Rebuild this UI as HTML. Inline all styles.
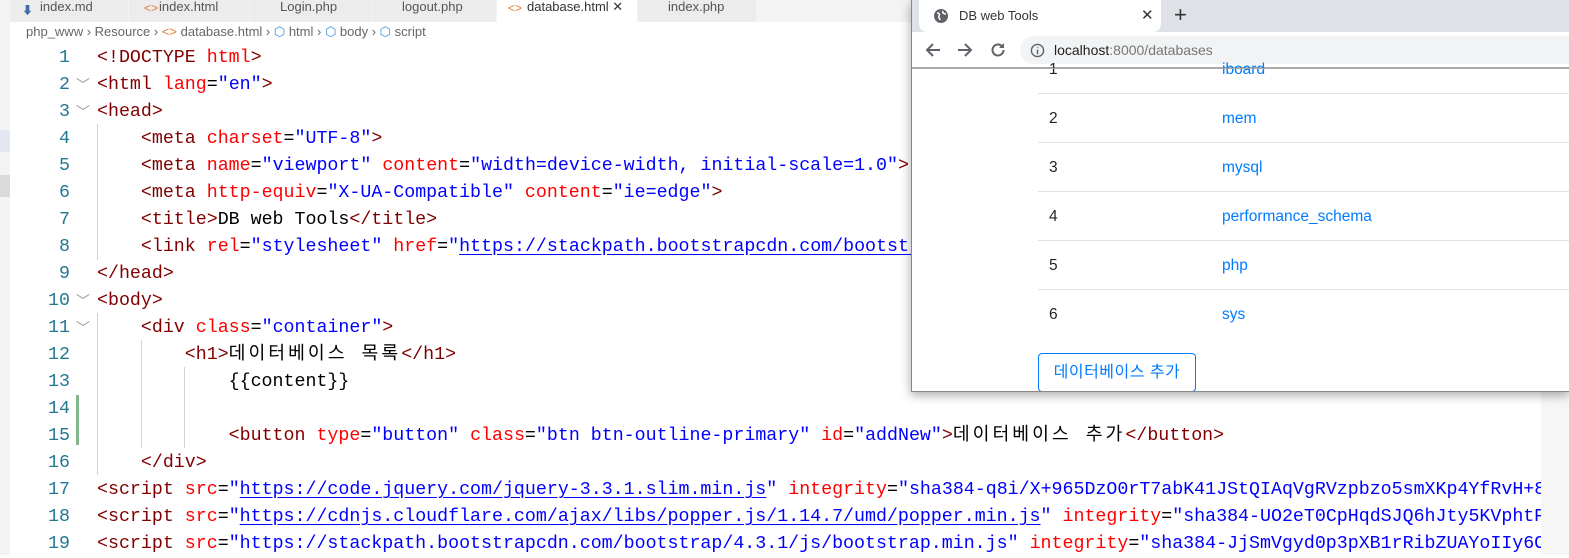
<!DOCTYPE html>
<html><head><meta charset="utf-8">
<style>
*{margin:0;padding:0;box-sizing:border-box}
body{width:1569px;height:555px;overflow:hidden;background:#fff;position:relative;font-family:"Liberation Sans","Noto Sans CJK KR",sans-serif}
.side{position:absolute;left:0;top:0;width:10px;height:555px;background:#f3f3f3}
.tabs{position:absolute;left:10px;top:0;width:1559px;height:22px;background:#f3f3f3}
.tab{position:absolute;top:0;height:22px;background:#ececec;border-right:1px solid #f3f3f3;font-size:13px;color:#555;line-height:14px;padding-left:30px;overflow:hidden}
.tab.act{background:#fff;color:#333}
.crumb{position:absolute;left:26px;top:24px;font-size:13px;color:#666;white-space:nowrap}
.code{position:absolute;left:0;top:45px;font-family:"Liberation Mono","Noto Sans CJK KR",monospace;font-size:18.3px;line-height:27px;white-space:pre}
.ko{letter-spacing:3px}
.ln{position:absolute;left:10px;width:60px;text-align:right;color:#237893;font-family:"Liberation Mono",monospace;font-size:18.3px;line-height:27px}
.t{color:#800000}.a{color:#ff0000}.s{color:#0000ff}.u{text-decoration:underline;text-decoration-color:#0000ff;text-underline-offset:3px}
.guide{position:absolute;width:1px;background:#d3d3d3}
.fold{position:absolute;left:76px;color:#999;font-size:14px;line-height:27px}
.mini{position:absolute;left:1541px;top:392px;width:28px;height:163px;background:#f6f6f6}
.win{position:absolute;left:911px;top:0;width:658px;height:392px;background:#fff;border-left:1px solid #888;border-bottom:1px solid #888;box-shadow:0 3px 10px rgba(0,0,0,.35);overflow:hidden}
.tstrip{position:absolute;left:0;top:0;width:100%;height:32px;background:#dee1e6}
.btab{position:absolute;left:7px;top:0;width:242px;height:32px;background:#fff;border-radius:0 0 8px 8px;font-size:13px;color:#333}
.nav{position:absolute;left:0;top:32px;width:100%;height:36px;background:#fff;border-bottom:1px solid #aaa}
.pill{position:absolute;left:108px;top:4px;width:560px;height:28px;background:#f1f3f4;border-radius:14px;font-size:14px;line-height:28px;padding-left:34px;color:#222}
.row{position:absolute;left:126px;width:540px;border-top:1px solid #dee2e6}
.cell{position:absolute;font-size:15.5px;color:#212529}
.lk{color:#007bff}
.btn{position:absolute;left:126px;top:353px;width:158px;height:39px;border:1px solid #007bff;border-radius:4px;color:#007bff;font-size:16px;text-align:center;line-height:37px;letter-spacing:0.5px}
</style></head><body>
<div class="side"></div>
<div style="position:absolute;left:0;top:130px;width:10px;height:22px;background:#e4e6f1"></div>
<div style="position:absolute;left:0;top:175px;width:10px;height:22px;background:#dadada"></div>
<div class="tabs">
<div class="tab" style="left:0;width:119px">index.md</div>
<div class="tab" style="left:119px;width:121px">index.html</div>
<div class="tab" style="left:240px;width:122px">Login.php</div>
<div class="tab" style="left:362px;width:125px">logout.php</div>
<div class="tab act" style="left:487px;width:141px">database.html ✕</div>
<div class="tab" style="left:628px;width:119px">index.php</div>
</div>
<div style="position:absolute;left:22px;top:2px;color:#3a6ea5;font-size:11px">⬇</div>
<div style="position:absolute;left:144px;top:1px;color:#e37933;font-size:12px">&lt;&gt;</div>
<div style="position:absolute;left:508px;top:1px;color:#e37933;font-size:12px">&lt;&gt;</div>
<div class="crumb">php_www › Resource › <span style="color:#e37933">&lt;&gt;</span> database.html › <span style="color:#3a8ed6">⬡</span> html › <span style="color:#3a8ed6">⬡</span> body › <span style="color:#3a8ed6">⬡</span> script</div>

<div class="ln" style="top:45px">1<br>2<br>3<br>4<br>5<br>6<br>7<br>8<br>9<br>10<br>11<br>12<br>13<br>14<br>15<br>16<br>17<br>18<br>19</div>
<div class="fold" style="top:72px">﹀</div><div class="fold" style="top:99px">﹀</div><div class="fold" style="top:288px">﹀</div><div class="fold" style="top:315px">﹀</div>
<div style="position:absolute;left:76px;top:395px;width:3px;height:50px;background:#81b88b"></div>
<div class="guide" style="left:97px;top:124px;height:136px"></div>
<div class="guide" style="left:97px;top:313px;height:162px"></div>
<div class="guide" style="left:141px;top:340px;height:108px"></div>
<div class="guide" style="left:184px;top:367px;height:81px"></div>
<div class="code" style="left:97px"><span class="t">&lt;!DOCTYPE</span> <span class="a">html</span><span class="t">&gt;</span>
<span class="t">&lt;html</span> <span class="a">lang</span>=<span class="s">"en"</span><span class="t">&gt;</span>
<span class="t">&lt;head&gt;</span>
    <span class="t">&lt;meta</span> <span class="a">charset</span>=<span class="s">"UTF-8"</span><span class="t">&gt;</span>
    <span class="t">&lt;meta</span> <span class="a">name</span>=<span class="s">"viewport"</span> <span class="a">content</span>=<span class="s">"width=device-width, initial-scale=1.0"</span><span class="t">&gt;</span>
    <span class="t">&lt;meta</span> <span class="a">http-equiv</span>=<span class="s">"X-UA-Compatible"</span> <span class="a">content</span>=<span class="s">"ie=edge"</span><span class="t">&gt;</span>
    <span class="t">&lt;title&gt;</span>DB web Tools<span class="t">&lt;/title&gt;</span>
    <span class="t">&lt;link</span> <span class="a">rel</span>=<span class="s">"stylesheet"</span> <span class="a">href</span>=<span class="s">"<span class="u">https://stackpath.bootstrapcdn.com/bootstrap</span>"</span>
<span class="t">&lt;/head&gt;</span>
<span class="t">&lt;body&gt;</span>
    <span class="t">&lt;div</span> <span class="a">class</span>=<span class="s">"container"</span><span class="t">&gt;</span>
        <span class="t">&lt;h1&gt;</span><span class="ko">데이터베이스 목록</span><span class="t">&lt;/h1&gt;</span>
            {{content}}

            <span class="t">&lt;button</span> <span class="a">type</span>=<span class="s">"button"</span> <span class="a">class</span>=<span class="s">"btn btn-outline-primary"</span> <span class="a">id</span>=<span class="s">"addNew"</span><span class="t">&gt;</span><span class="ko">데이터베이스 추가</span><span class="t">&lt;/button&gt;</span>
    <span class="t">&lt;/div&gt;</span>
<span class="t">&lt;script</span> <span class="a">src</span>=<span class="s">"<span class="u">https://code.jquery.com/jquery-3.3.1.slim.min.js</span>"</span> <span class="a">integrity</span>=<span class="s">"sha384-q8i/X+965DzO0rT7abK41JStQIAqVgRVzpbzo5smXKp4YfRvH+8</span>
<span class="t">&lt;script</span> <span class="a">src</span>=<span class="s">"<span class="u">https://cdnjs.cloudflare.com/ajax/libs/popper.js/1.14.7/umd/popper.min.js</span>"</span> <span class="a">integrity</span>=<span class="s">"sha384-UO2eT0CpHqdSJQ6hJty5KVphtP</span>
<span class="t">&lt;script</span> <span class="a">src</span>=<span class="s">"https://stackpath.bootstrapcdn.com/bootstrap/4.3.1/js/bootstrap.min.js"</span> <span class="a">integrity</span>=<span class="s">"sha384-JjSmVgyd0p3pXB1rRibZUAYoIIy6O</span></div>
<div style="position:absolute;left:1541px;top:0;width:28px;height:555px;background:#fff"></div>
<div class="mini"></div>

<div class="win">
<div class="tstrip"></div>
<div class="btab"><svg style="position:absolute;left:14px;top:8px" width="16" height="16" viewBox="0 0 16 16"><circle cx="8" cy="8" r="7" fill="#5f6368"/><path d="M4 5c2 0 3 1 2 3s1 2 1 4M10 3c-1 2 1 3 3 3" stroke="#fff" stroke-width="1.5" fill="none"/></svg><span style="position:absolute;left:40px;top:8px">DB web Tools</span><span style="position:absolute;left:222px;top:6px;font-size:15px;color:#333">✕</span></div>
<div style="position:absolute;left:262px;top:2px;font-size:22px;color:#333">+</div>
<div class="nav">
<svg style="position:absolute;left:12px;top:9px" width="18" height="18" viewBox="0 0 18 18"><path d="M16 9H3M9 3L3 9l6 6" stroke="#5f6368" stroke-width="2" fill="none"/></svg>
<svg style="position:absolute;left:44px;top:9px" width="18" height="18" viewBox="0 0 18 18"><path d="M2 9h13M9 3l6 6-6 6" stroke="#5f6368" stroke-width="2" fill="none"/></svg>
<svg style="position:absolute;left:77px;top:9px" width="18" height="18" viewBox="0 0 18 18"><path d="M14.5 9a5.5 5.5 0 1 1-1.6-3.9" stroke="#5f6368" stroke-width="2" fill="none"/><path d="M15 2v5h-5z" fill="#5f6368"/></svg>
<div class="pill"><svg style="position:absolute;left:10px;top:7px" width="15" height="15" viewBox="0 0 16 16"><circle cx="8" cy="8" r="6.5" stroke="#5f6368" stroke-width="1.5" fill="none"/><path d="M8 7v5M8 4.5v1" stroke="#5f6368" stroke-width="1.6"/></svg>localhost<span style="color:#777">:8000/databases</span></div>
</div>
<div class="cell" style="left:137px;top:61px">1</div><div class="cell lk" style="left:310px;top:61px">iboard</div>
<div class="row" style="top:93px"></div>
<div class="cell" style="left:137px;top:110px">2</div><div class="cell lk" style="left:310px;top:110px">mem</div>
<div class="row" style="top:142px"></div>
<div class="cell" style="left:137px;top:159px">3</div><div class="cell lk" style="left:310px;top:159px">mysql</div>
<div class="row" style="top:191px"></div>
<div class="cell" style="left:137px;top:208px">4</div><div class="cell lk" style="left:310px;top:208px">performance_schema</div>
<div class="row" style="top:240px"></div>
<div class="cell" style="left:137px;top:257px">5</div><div class="cell lk" style="left:310px;top:257px">php</div>
<div class="row" style="top:289px"></div>
<div class="cell" style="left:137px;top:306px">6</div><div class="cell lk" style="left:310px;top:306px">sys</div>
<div class="btn">데이터베이스 추가</div>
<div style="position:absolute;left:0;top:68px;width:658px;height:1px;background:#aaa"></div>
</div>
</body></html>
